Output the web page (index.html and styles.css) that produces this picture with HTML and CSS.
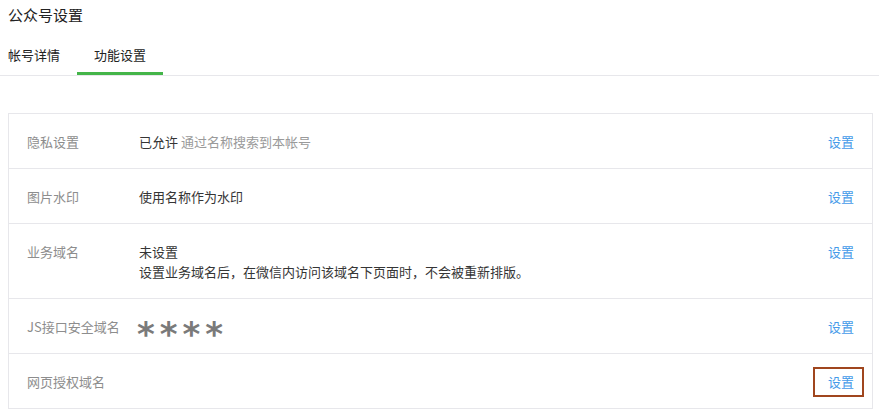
FILE: index.html
```html
<!DOCTYPE html>
<html lang="zh-CN">
<head>
    <meta charset="UTF-8">
    <meta name="viewport" content="width=device-width, initial-scale=1.0">
    <title>公众号设置</title>
    <link rel="stylesheet" href="styles.css">
</head>
<body>
<div class="page-title">公众号设置</div>

<div class="tabs">
    <div class="tab">帐号详情</div>
    <div class="tab active">功能设置</div>
</div>

<div class="setting-table">
    <div class="setting-row">
        <div class="label">隐私设置</div>
        <div class="value">已允许 <span class="tip">通过名称搜索到本帐号</span></div>
        <a class="action" href="#">设置</a>
    </div>
    <div class="setting-row">
        <div class="label">图片水印</div>
        <div class="value">使用名称作为水印</div>
        <a class="action" href="#">设置</a>
    </div>
    <div class="setting-row">
        <div class="label">业务域名</div>
        <div class="value">
            <div>未设置</div>
            <div>设置业务域名后，在微信内访问该域名下页面时，不会被重新排版。</div>
        </div>
        <a class="action" href="#">设置</a>
    </div>
    <div class="setting-row">
        <div class="label">JS接口安全域名</div>
        <div class="value masked">****</div>
        <a class="action" href="#">设置</a>
    </div>
    <div class="setting-row">
        <div class="label">网页授权域名</div>
        <div class="value"></div>
        <a class="action highlighted" href="#">设置<span class="mark"></span></a>
    </div>
</div>
</body>
</html>
```

FILE: styles.css
```css
body {
    margin: 0;
    font-family: "Noto Sans CJK SC", "Liberation Sans", sans-serif;
    font-size: 13px;
    color: #353535;
    background: #fff;
}

.page-title {
    margin-top: 5px;
    padding-left: 8px;
    font-size: 15px;
    line-height: 20px;
    color: #222;
}

.tabs {
    display: flex;
    margin-top: 10px;
    padding-left: 8px;
    border-bottom: 1px solid #e7e7eb;
}

.tab {
    height: 37px;
    line-height: 40px;
    padding: 0 17px;
    border-bottom: 3px solid transparent;
    color: #222;
}

.tab:first-child {
    padding-left: 0;
}

.tab.active {
    border-bottom-color: #44b549;
}

.setting-table {
    margin: 37px 6px 0 8px;
    border: 1px solid #e7e7eb;
}

.setting-row {
    display: flex;
    align-items: flex-start;
    padding: 18px 0 16px;
    line-height: 20px;
}

.setting-row + .setting-row {
    border-top: 1px solid #e7e7eb;
}

.label {
    width: 112px;
    padding-left: 18px;
    flex-shrink: 0;
    color: #8d8d8d;
}

.value {
    flex: 1;
    color: #353535;
}

.tip {
    color: #9a9a9a;
}

.masked {
    height: 20px;
    font-family: "DejaVu Sans", sans-serif;
    font-weight: bold;
    font-size: 34px;
    line-height: 34px;
    letter-spacing: 5px;
    color: #7a7a7a;
    margin-left: -2px;
}

.action {
    position: relative;
    margin-right: 18px;
    color: #459ae9;
    text-decoration: none;
}

.mark {
    position: absolute;
    left: -15px;
    right: -10px;
    top: -5px;
    bottom: -5px;
    border: 2px solid #a0461e;
}
```
